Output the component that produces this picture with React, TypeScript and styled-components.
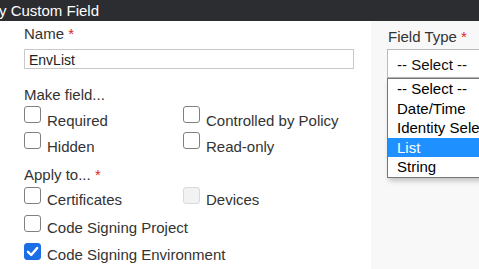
import React from "react";
import styled, { createGlobalStyle } from "styled-components";

const GlobalStyle = createGlobalStyle`
  html, body {
    margin: 0;
    padding: 0;
    width: 479px;
    height: 269px;
    overflow: hidden;
    background: #ffffff;
  }
  body {
    font-family: "Liberation Sans", Arial, sans-serif;
  }
`;

const Page = styled.div`
  width: 479px;
  height: 269px;
  display: flex;
  flex-direction: column;
  overflow: hidden;
`;

const Header = styled.div`
  height: 21px;
  flex: none;
  background: #2c2d31;
  color: #ffffff;
  font-size: 15px;
  line-height: 21px;
  white-space: nowrap;
  text-indent: -1px;
`;

const Main = styled.div`
  flex: 1;
  display: flex;
  min-height: 0;
`;

const LeftCol = styled.div`
  width: 371px;
  flex: none;
  box-sizing: border-box;
  padding: 4px 0 0 24px;
  display: flex;
  flex-direction: column;
`;

const RightCol = styled.div`
  flex: 1;
  background: #f8f8f8;
  padding: 7px 0 0 16px;
  display: flex;
  flex-direction: column;
  position: relative;
`;

const Label = styled.div<{ $mt?: number; $ml?: number }>`
  font-size: 15px;
  line-height: 17px;
  color: #333333;
  margin-top: ${(p) => p.$mt ?? 0}px;
  margin-left: ${(p) => p.$ml ?? 0}px;
  white-space: nowrap;
`;

const Req = styled.span`
  color: #d9262b;
`;

const TextInput = styled.input`
  margin-top: 7px;
  width: 330px;
  height: 21px;
  box-sizing: border-box;
  border: 1px solid #c9c9c9;
  padding: 2px 4px 0 4px;
  font-family: "Liberation Sans", Arial, sans-serif;
  font-size: 14px;
  color: #222222;
  background: #ffffff;
  outline: none;
`;

const CheckGrid = styled.div<{ $mt: number; $row: number }>`
  margin-top: ${(p) => p.$mt}px;
  display: grid;
  grid-template-columns: 159px 1fr;
  grid-auto-rows: ${(p) => p.$row}px;
`;

const CheckItem = styled.div`
  display: flex;
  align-items: flex-start;
  gap: 6px;
`;

const Box = styled.span<{ $state: "off" | "on" | "disabled" }>`
  width: 17px;
  height: 17px;
  box-sizing: border-box;
  flex: none;
  border-radius: 3px;
  display: flex;
  align-items: center;
  justify-content: center;
  border: 1px solid
    ${(p) =>
      p.$state === "on" ? "#1b6ee6" : p.$state === "disabled" ? "#d9d9d9" : "#808080"};
  background: ${(p) =>
    p.$state === "on" ? "#1b6ee6" : p.$state === "disabled" ? "#f2f2f2" : "#ffffff"};
`;

const CheckText = styled.span<{ $pt: number }>`
  padding-top: ${(p) => p.$pt}px;
  font-size: 15px;
  line-height: 17px;
  color: #333333;
  white-space: nowrap;
`;

const SelectWrap = styled.div`
  margin-top: 4px;
  position: relative;
`;

const SelectBox = styled.div`
  height: 29px;
  width: 140px;
  box-sizing: border-box;
  border: 1px solid #b9b9b9;
  background: #ffffff;
  padding: 6px 0 0 9px;
  font-size: 15px;
  line-height: 17px;
  color: #111111;
  white-space: nowrap;
`;

const DropList = styled.ul`
  position: absolute;
  top: 29px;
  left: 0;
  width: 140px;
  margin: 0;
  padding: 0;
  list-style: none;
  background: #ffffff;
  border: 1px solid #767676;
  box-shadow: 2px 3px 5px rgba(0, 0, 0, 0.22);
`;

const Option = styled.li<{ $selected?: boolean }>`
  height: 19.5px;
  line-height: 19.5px;
  padding-left: 9px;
  font-size: 15px;
  white-space: nowrap;
  overflow: hidden;
  color: ${(p) => (p.$selected ? "#ffffff" : "#000000")};
  background: ${(p) => (p.$selected ? "#1e90ff" : "transparent")};
`;

const Check = ({ state, label, pt }: { state: "off" | "on" | "disabled"; label: string; pt: number }) => (
  <CheckItem>
    <Box $state={state}>
      {state === "on" && (
        <svg width="13" height="13" viewBox="0 0 13 13">
          <path d="M2 6.8 L5.2 10 L11.2 3" fill="none" stroke="#ffffff" strokeWidth="2.4" strokeLinecap="round" strokeLinejoin="round" />
        </svg>
      )}
    </Box>
    <CheckText $pt={pt}>{label}</CheckText>
  </CheckItem>
);

const options = ["-- Select --", "Date/Time", "Identity Selector", "List", "String"];

export default function App() {
  return (
    <Page>
      <GlobalStyle />
      <Header>y Custom Field</Header>
      <Main>
        <LeftCol>
          <Label>
            Name <Req>*</Req>
          </Label>
          <TextInput value="EnvList" readOnly />
          <Label $mt={17}>Make field...</Label>
          <CheckGrid $mt={3} $row={26}>
            <Check state="off" label="Required" pt={6} />
            <Check state="off" label="Controlled by Policy" pt={6} />
            <Check state="off" label="Hidden" pt={6} />
            <Check state="off" label="Read-only" pt={6} />
          </CheckGrid>
          <Label $mt={8}>
            Apply to... <Req>*</Req>
          </Label>
          <CheckGrid $mt={4} $row={28}>
            <Check state="off" label="Certificates" pt={4} />
            <Check state="disabled" label="Devices" pt={4} />
            <Check state="off" label="Code Signing Project" pt={4} />
            <span />
            <Check state="on" label="Code Signing Environment" pt={3} />
          </CheckGrid>
        </LeftCol>
        <RightCol>
          <Label $ml={1}>
            Field Type <Req>*</Req>
          </Label>
          <SelectWrap>
            <SelectBox>-- Select --</SelectBox>
            <DropList>
              {options.map((o) => (
                <Option key={o} $selected={o === "List"}>
                  {o}
                </Option>
              ))}
            </DropList>
          </SelectWrap>
        </RightCol>
      </Main>
    </Page>
  );
}
